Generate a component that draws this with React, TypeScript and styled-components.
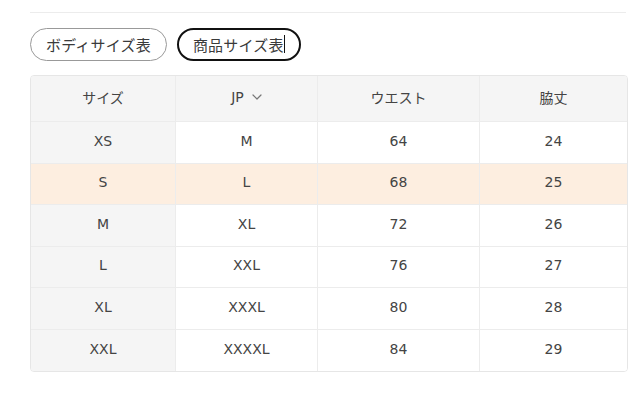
import React from "react";
import styled, { createGlobalStyle } from "styled-components";

const Global = createGlobalStyle`
  html, body { margin: 0; padding: 0; background: #fff; }
  body { font-family: "DejaVu Sans", "Noto Sans CJK JP", sans-serif; color: #333; }
`;

const Page = styled.div`
  width: 640px;
  height: 411px;
  padding: 12px 14px 0 30px;
  box-sizing: border-box;
`;

const Rule = styled.div`
  height: 1px;
  background: #ececec;
  width: 596px;
`;

const Tabs = styled.div`
  display: flex;
  gap: 10px;
  margin-top: 15px;
`;

const Pill = styled.button<{ $active?: boolean }>`
  height: 33px;
  box-sizing: border-box;
  border-radius: 17px;
  background: #fff;
  border: ${(p) => (p.$active ? "2px solid #111" : "1px solid #999")};
  padding: 0 ${(p) => (p.$active ? "14px" : "15px")} 1px;
  font-family: "Noto Sans CJK JP", sans-serif;
  font-weight: 400;
  font-size: 15px;
  letter-spacing: 0.2px;
  color: #3a3a3a;
  display: flex;
  align-items: center;
  cursor: pointer;
`;

const Caret = styled.span`
  display: inline-block;
  width: 1px;
  height: 18px;
  background: #111;
`;

const Table = styled.div`
  margin-top: 14px;
  width: 596px;
  border: 1px solid #e6e6e6;
  border-radius: 4px;
  overflow: hidden;
  display: grid;
  grid-template-columns: 145px 142px 162px 1fr;
`;

const Cell = styled.div<{ $head?: boolean; $first?: boolean; $hl?: boolean; $last?: boolean; $lastRow?: boolean }>`
  height: ${(p) => (p.$head ? "46px" : "41.5px")};
  padding-bottom: 3px;
  display: flex;
  align-items: center;
  justify-content: center;
  font-size: 14px;
  color: #444;
  font-family: "DejaVu Sans", "Noto Sans CJK JP", sans-serif;
  background: ${(p) => (p.$hl ? "#fdeee0" : p.$head || p.$first ? "#f5f5f5" : "#fff")};
  border-right: ${(p) => (p.$last ? "none" : "1px solid #ececec")};
  border-bottom: ${(p) => (p.$lastRow ? "none" : "1px solid #ececec")};
  box-sizing: border-box;
  gap: 8px;
`;

const Chevron = () => (
  <svg width="10" height="6" viewBox="0 0 10 6" fill="none">
    <path d="M1 1l4 4 4-4" stroke="#777" strokeWidth="1.2" strokeLinecap="round" strokeLinejoin="round" />
  </svg>
);

const rows = [
  ["XS", "M", "64", "24"],
  ["S", "L", "68", "25"],
  ["M", "XL", "72", "26"],
  ["L", "XXL", "76", "27"],
  ["XL", "XXXL", "80", "28"],
  ["XXL", "XXXXL", "84", "29"],
];

export default function App() {
  return (
    <>
      <Global />
      <Page>
        <Rule />
        <Tabs>
          <Pill>ボディサイズ表</Pill>
          <Pill $active>
            商品サイズ表
            <Caret />
          </Pill>
        </Tabs>
        <Table>
          <Cell $head>サイズ</Cell>
          <Cell $head>
            JP <Chevron />
          </Cell>
          <Cell $head>ウエスト</Cell>
          <Cell $head $last>脇丈</Cell>
          {rows.map((r, i) =>
            r.map((v, j) => (
              <Cell
                key={`${i}-${j}`}
                $first={j === 0}
                $hl={i === 1}
                $last={j === 3}
                $lastRow={i === rows.length - 1}
              >
                {v}
              </Cell>
            ))
          )}
        </Table>
      </Page>
    </>
  );
}
